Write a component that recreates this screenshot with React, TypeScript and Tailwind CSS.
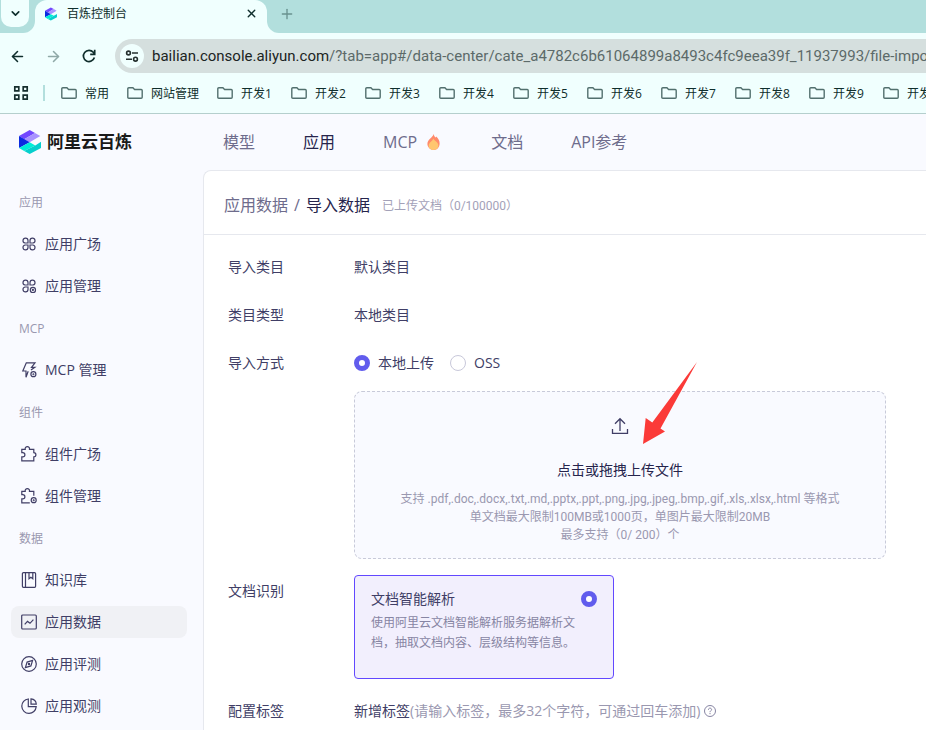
import { useState } from 'react';
import type { ReactNode } from 'react';
import { ArrowLeft, ArrowRight, ChevronDown, Plus, X } from 'lucide-react';

interface MenuItem {
  label: string;
  icon: ReactNode;
}

interface MenuGroup {
  title: string;
  items: MenuItem[];
}

const bookmarks = ['常用', '网站管理', '开发1', '开发2', '开发3', '开发4', '开发5', '开发6', '开发7', '开发8', '开发9', '开发10'];

function Icon({ children }: { children: ReactNode }) {
  return (
    <svg className="w-4 h-4 shrink-0" viewBox="0 0 16 16" fill="none" stroke="currentColor" strokeWidth="1.2" aria-hidden="true">
      {children}
    </svg>
  );
}

function LogoMark({ className }: { className: string }) {
  return (
    <svg className={className} viewBox="0 0 22 24" aria-hidden="true">
      <path d="M0 6 10.7 0l5.3 3L5.2 9.2z" fill="#7347ff" />
      <path d="m16 3 5.3 2.9-10.6 6.4-5.5-3.1z" fill="#a992ff" />
      <path d="M0 6v12l10.7-5.7z" fill="#0b2be0" />
      <path d="M0 18l10.7-5.7 5.6 3.1L5.2 21z" fill="#00eed8" />
      <path d="m16.3 15.4 5.7-3.6v6.1L10.7 24l-5.5-3z" fill="#06cfcd" />
    </svg>
  );
}

function FolderIcon() {
  return (
    <svg className="w-4 h-4 shrink-0" viewBox="0 0 16 16" fill="none" stroke="#52706e" strokeWidth="1.4" aria-hidden="true">
      <path d="M.8 12.3V3.7c0-.6.4-1 1-1h4.1l1.7 1.8h6.6c.6 0 1 .4 1 1v6.8c0 .6-.4 1-1 1H1.8c-.6 0-1-.4-1-1z" />
    </svg>
  );
}

function FlameIcon() {
  return (
    <svg className="w-[18px] h-[18px]" viewBox="0 0 18 18" aria-hidden="true">
      <path d="M8.6 1c.4 1.9 1.2 2.6 2.1 3.6.3-.2.5-.6.6-1 2.3 2.3 3.500 4.600 3.300 7.200-.2 3.600-2.500 6.200-5.900 6.200S2.500 14.300 2.400 11c0-2.500 1.300-4 2.600-5.300C6.500 4.200 8.100 3.200 8.600 1z" fill="#ff8a6b" />
      <path d="M8.400 5.600c.5 1.900 5 3.600 5 7 0 2.600-2.200 4.400-4.800 4.400s-4.900-1.700-4.900-4.300c0-3.100 3.500-3.900 4.700-7.100z" fill="#ffc670" />
    </svg>
  );
}

const clover = <path d="M7 7H4a2.500 2.500 0 1 1 3-2.500zM9 7h3a2.500 2.500 0 1 0-3-2.500zM7 9H4a2.500 2.500 0 1 0 3 2.500z" />;

const menu: MenuGroup[] = [
  {
    title: '应用',
    items: [
      { label: '应用广场', icon: <Icon>{clover}<path d="M9 9h3a2.500 2.500 0 1 1-3 2.500z" /></Icon> },
      { label: '应用管理', icon: <Icon>{clover}<circle cx="11.900" cy="11.900" r="2.600" /><circle cx="11.900" cy="11.900" r=".5" /></Icon> },
    ],
  },
  {
    title: 'MCP',
    items: [
      {
        label: 'MCP 管理',
        icon: (
          <Icon>
            <path d="M7.200 9.300 5 15.300V9H1.800L5.300.8H14l-3.500 4.500h3.300L10 8" />
            <circle cx="12.400" cy="12.200" r="2.500" />
            <circle cx="12.400" cy="12.200" r=".4" />
          </Icon>
        ),
      },
    ],
  },
  {
    title: '组件',
    items: [
      {
        label: '组件广场',
        icon: <Icon><path d="M.8 3.300h3.400a2.200 2.200 0 1 1 4.300 0h4.300v3.400a2.100 2.100 0 1 1 0 4.200v4H.8v-4h1a2.100 2.100 0 0 0 0-4.200h-1z" /></Icon>,
      },
      {
        label: '组件管理',
        icon: (
          <Icon>
            <path d="M8.800 14.900h-8v-4h1a2.100 2.100 0 0 0 0-4.200h-1V3.300h3.400a2.200 2.200 0 1 1 4.300 0h4.300v4.400" />
            <circle cx="12.700" cy="12.200" r="2.500" />
            <circle cx="12.700" cy="12.200" r=".4" />
          </Icon>
        ),
      },
    ],
  },
  {
    title: '数据',
    items: [
      {
        label: '知识库',
        icon: <Icon><rect x="1.400" y=".7" width="13.200" height="14.600" rx="1" /><path d="M4.500.7v14.600M8 .7v6l1.900-1.500L11.800 6.700v-6" /></Icon>,
      },
      {
        label: '应用数据',
        icon: <Icon><rect x=".7" y="1" width="14.600" height="14" rx="1" /><path d="m3.700 10.400 2.800-3 2.500 1.900 3.400-3.700" /></Icon>,
      },
      {
        label: '应用评测',
        icon: <Icon><circle cx="8" cy="8" r="7.300" /><path d="M11.600 4.400 9.900 9.900l-5.500 1.700 1.700-5.500z" /><circle cx="8" cy="8" r=".6" /></Icon>,
      },
      {
        label: '应用观测',
        icon: <Icon><path d="M7.300 1a7.200 7.200 0 1 0 7.900 7.700H7.300z" /><path d="M10 .8v5.400h5.300A5.800 5.800 0 0 0 10 .8z" /></Icon>,
      },
    ],
  },
];

function BrowserChrome() {
  return (
    <div className="shrink-0 bg-[#f0fffe] text-[#0f2e2c]">
      <div className="flex h-[33px] bg-[#b2dfdd]">
        <div className="flex w-[35px] shrink-0 bg-[#f0fffe]">
          <div className="flex-1 rounded-br-xl bg-[#b2dfdd] pl-px">
            <button type="button" aria-label="搜索标签页" className="flex h-[27px] w-7 items-center justify-center rounded-b-[10px] bg-[#f0fffe]">
              <ChevronDown size={13} strokeWidth={3} />
            </button>
          </div>
        </div>
        <div className="flex w-[232px] items-center rounded-t-xl bg-[#f0fffe] pl-2.5 pr-2 pb-[6px]">
          <LogoMark className="h-3.5 w-3" />
          <span className="ml-2.5 flex-1 text-xs">百炼控制台</span>
          <button type="button" aria-label="关闭" className="flex h-4 w-4 items-center justify-center">
            <X size={13} strokeWidth={2.5} />
          </button>
        </div>
        <div className="flex flex-1 bg-[#f0fffe]">
          <div className="flex flex-1 rounded-bl-xl bg-[#b2dfdd] pl-3 pb-[6px]">
            <button type="button" aria-label="新标签页" className="text-[#69928f]">
              <Plus size={16} />
            </button>
          </div>
        </div>
      </div>

      <div className="flex h-[46px] items-center pl-2">
        <button type="button" aria-label="后退" className="flex w-[18px] justify-center">
          <ArrowLeft size={17} strokeWidth={2.2} />
        </button>
        <button type="button" aria-label="前进" className="ml-[18px] flex w-[18px] justify-center text-[#8fa9a7]">
          <ArrowRight size={17} strokeWidth={2.2} />
        </button>
        <button type="button" aria-label="重新加载" className="ml-[18px] flex w-[18px] justify-center">
          <svg className="w-4 h-4" viewBox="0 0 16 16" fill="none" stroke="currentColor" strokeWidth="1.7" aria-hidden="true">
            <path d="M13.400 9.500A5.600 5.600 0 1 1 12.300 4.300L13.600 5.800M13.700 1.800V6.300H9.200" />
          </svg>
        </button>
        <div className="ml-[17px] flex h-[34px] min-w-0 flex-1 items-center overflow-hidden rounded-l-full bg-[#d5dfde] pl-[5px]">
          <button type="button" aria-label="查看网站信息" className="flex h-6 w-6 shrink-0 items-center justify-center rounded-full bg-[#f0fffe]">
            <svg className="w-4 h-4" viewBox="0 0 16 16" fill="none" stroke="#25302f" strokeWidth="1.6" aria-hidden="true">
              <circle cx="4.500" cy="5" r="1.900" />
              <circle cx="11.500" cy="11.200" r="1.900" />
              <path d="M8 5h6M2 11.200h6" />
            </svg>
          </button>
          <p className="ml-2 whitespace-nowrap font-['Roboto',sans-serif] text-[15px] text-[#5c6a69]">
            <span className="text-[#1b2423]">bailian.console.aliyun.com</span>
            /?tab=app#/data-center/cate_a4782c6b61064899a8493c4fc9eea39f_11937993/file-import
          </p>
        </div>
      </div>

      <div className="flex h-[35px] items-center overflow-hidden border-b border-[#b5cfcd] pb-[6px] pl-[13px]">
        <svg className="w-4 h-4 shrink-0" viewBox="0 0 16 16" fill="none" stroke="#17302f" strokeWidth="1.7" aria-hidden="true">
          <path d="M1.800 1.800h4v4h-4zM10.200 1.800h4v4h-4zM1.800 10.200h4v4h-4zM10.200 10.200h4v4h-4z" />
        </svg>
        <div className="ml-3.5 mr-4 h-4 w-0.5 shrink-0 bg-[#b2dfdd]" />
        <div className="flex gap-[18px]">
          {bookmarks.map((name) => (
            <button
              key={name}
              type="button"
              className={`flex shrink-0 items-center gap-2 whitespace-nowrap text-xs ${name.length > 2 ? 'min-w-14' : ''}`}
            >
              <FolderIcon />
              <span className="pt-0.5">{name}</span>
            </button>
          ))}
        </div>
      </div>
    </div>
  );
}

function TopNav() {
  return (
    <header className="flex h-14 shrink-0 items-center">
      <div className="flex w-[223px] shrink-0 items-center gap-1.5 pl-[19px]">
        <LogoMark className="h-6 w-[22px]" />
        <span className="text-[17px] font-bold text-[#1a1a1a]">阿里云百炼</span>
      </div>
      <nav className="flex items-center gap-12 whitespace-nowrap text-base text-[#6e6c8c]">
        <a href="#model">模型</a>
        <a href="#app" className="text-[#26244c]">应用</a>
        <a href="#mcp" className="flex items-center gap-2 font-medium">
          MCP
          <FlameIcon />
        </a>
        <a href="#docs">文档</a>
        <a href="#api"><span className="font-medium">API</span>参考</a>
      </nav>
    </header>
  );
}

function Sidebar() {
  const [active, setActive] = useState('应用数据');

  return (
    <aside className="w-[203px] shrink-0 pl-[11px] pr-4 pt-4">
      {menu.map((group) => (
        <div key={group.title}>
          <h2 className="mb-2 pl-2 text-xs leading-[34px] text-[#9a98b0]">{group.title}</h2>
          {group.items.map((item) => (
            <button
              key={item.label}
              type="button"
              onClick={() => setActive(item.label)}
              className={`mb-2.5 flex h-8 w-full items-center gap-2 rounded-lg pl-2.5 text-sm text-[#403e66] ${active === item.label ? 'bg-[#f0f1f5]' : ''}`}
            >
              {item.icon}
              {item.label}
            </button>
          ))}
        </div>
      ))}
    </aside>
  );
}

function Row({ label, children }: { label: string; children: ReactNode }) {
  return (
    <div className="flex text-sm leading-8">
      <div className="w-[126px] shrink-0">{label}</div>
      <div className="min-w-0 flex-1">{children}</div>
    </div>
  );
}

const radioClass = 'h-4 w-4 shrink-0 appearance-none rounded-full border border-[#c8c8da] bg-white checked:border-[5px] checked:border-[#615ced]';
const hintFont = "font-['Roboto','Noto_Sans_CJK_SC',sans-serif]";

function UploadBox() {
  return (
    <button type="button" className="mt-3 block w-full rounded-lg border border-dashed border-[#c8cad9] bg-[#f9faff] pb-3.5 pt-[22px] text-center">
      <span className="relative mx-auto block w-6">
        <svg className="h-6 w-6" viewBox="0 0 24 24" fill="none" stroke="#403e66" strokeWidth="1.3" aria-hidden="true">
          <path d="M12 17V5M7 9.700l5-5 5 5M4.500 15v4.300h15V15" />
        </svg>
        {/* pointer towards the drop area */}
        <svg className="absolute -top-[52px] left-[35px] h-[82px] w-[54px]" viewBox="0 0 54 82" aria-hidden="true">
          <path d="M0 82 2.700 56 9.300 60.500 54 0 17.500 66.500 22 69.500z" fill="#fb3a38" />
        </svg>
      </span>
      <span className="mt-5 block text-sm leading-6 text-[#26244c]">点击或拖拽上传文件</span>
      <span className={`mt-2 block text-xs leading-[18px] text-[#9a98b0] ${hintFont}`}>
        支持 .pdf,.doc,.docx,.txt,.md,.pptx,.ppt,.png,.jpg,.jpeg,.bmp,.gif,.xls,.xlsx,.html 等格式
        <br />
        单文档最大限制100MB或1000页，单图片最大限制20MB
        <br />
        最多支持（0/ 200）个
      </span>
    </button>
  );
}

export default function App() {
  const [source, setSource] = useState('local');

  return (
    <div className="flex h-screen flex-col overflow-hidden bg-[#f9faff] font-['Open_Sans','Noto_Sans_CJK_SC',sans-serif]">
      <BrowserChrome />
      <TopNav />
      <div className="flex min-h-0 flex-1">
        <Sidebar />
        <main className="min-w-0 flex-1 overflow-hidden rounded-tl-lg border-l border-t border-[#e6e8ee] bg-white text-[#403e66]">
          <div className="flex h-16 items-center border-b border-[#e6e8ee] pl-5 pt-1 text-base text-[#6e6c8c]">
            <a href="#data">应用数据</a>
            <span className="mx-1.5">/</span>
            <h1 className="text-[#26244c]">导入数据</h1>
            <span className={`ml-3 pt-0.5 text-xs text-[#a3a1b8] ${hintFont}`}>已上传文档（0/100000）</span>
          </div>

          <form className="flex flex-col gap-4 py-4 pl-6 pr-10">
            <Row label="导入类目">默认类目</Row>
            <Row label="类目类型">本地类目</Row>
            <Row label="导入方式">
              <div className="flex gap-4">
                <label className="flex items-center gap-2">
                  <input type="radio" name="source" className={radioClass} checked={source === 'local'} onChange={() => setSource('local')} />
                  本地上传
                </label>
                <label className="flex items-center gap-2">
                  <input type="radio" name="source" className={radioClass} checked={source === 'oss'} onChange={() => setSource('oss')} />
                  <span className="font-medium">OSS</span>
                </label>
              </div>
              <UploadBox />
            </Row>
            <Row label="文档识别">
              <label className="block h-[104px] w-[260px] rounded border border-[#6248ff] bg-[#f2effd] px-4 pt-3">
                <span className="flex items-center justify-between leading-[22px]">
                  文档智能解析
                  <input type="radio" name="parser" className={radioClass} defaultChecked />
                </span>
                <span className="block pt-[3px] text-xs leading-5 text-[#8785a3]">
                  使用阿里云文档智能解析服务据解析文档，抽取文档内容、层级结构等信息。
                </span>
              </label>
            </Row>
            <Row label="配置标签">
              <div className="flex items-center whitespace-nowrap">
                <span>新增标签</span>
                <span className="text-[#9a98b0]">(请输入标签，最多32个字符，可通过回车添加)</span>
                <button type="button" aria-label="帮助" className="ml-1 text-[#8785a3]">
                  <svg className="h-3 w-3" viewBox="0 0 12 12" fill="none" stroke="currentColor" aria-hidden="true">
                    <circle cx="6" cy="6" r="5.500" />
                    <path d="M4.400 4.800C4.400 2.500 7.700 2.600 7.600 4.700 7.500 5.800 6 5.700 6 7.200M6 8v1.200" />
                  </svg>
                </button>
              </div>
            </Row>
          </form>
        </main>
      </div>
    </div>
  );
}
